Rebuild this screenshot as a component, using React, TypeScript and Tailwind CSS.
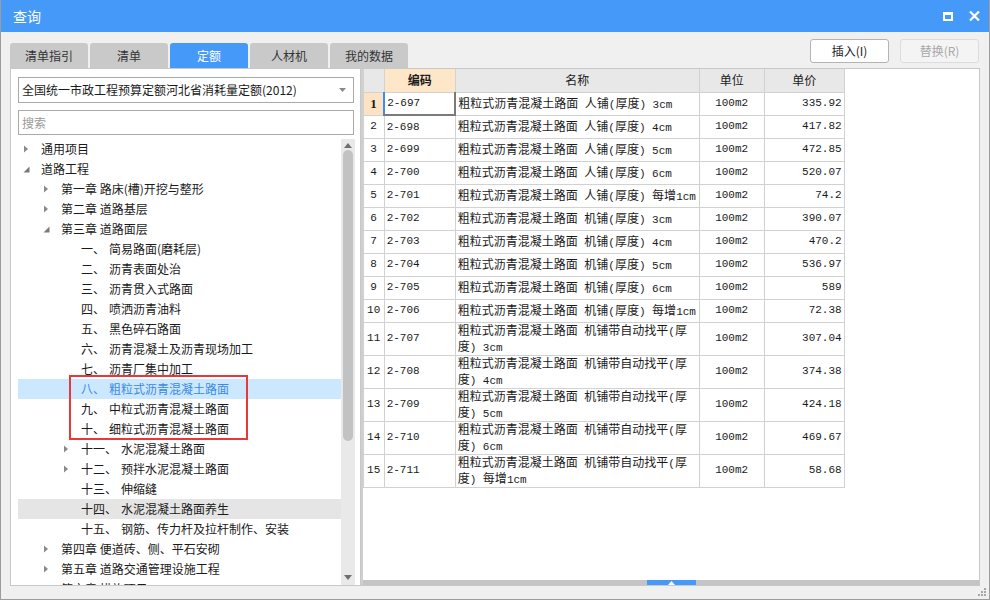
import React from 'react';

type TreeItem = {
  lvl: number;
  text: string;
  num?: string;
  arrow?: 'right' | 'down';
  selected?: boolean;
  hover?: boolean;
};

const TREE: TreeItem[] = [
  { lvl: 0, arrow: 'right', text: '通用项目' },
  { lvl: 0, arrow: 'down', text: '道路工程' },
  { lvl: 1, arrow: 'right', text: '第一章 路床(槽)开挖与整形' },
  { lvl: 1, arrow: 'right', text: '第二章 道路基层' },
  { lvl: 1, arrow: 'down', text: '第三章 道路面层' },
  { lvl: 2, num: '一、', text: '简易路面(磨耗层)' },
  { lvl: 2, num: '二、', text: '沥青表面处治' },
  { lvl: 2, num: '三、', text: '沥青贯入式路面' },
  { lvl: 2, num: '四、', text: '喷洒沥青油料' },
  { lvl: 2, num: '五、', text: '黑色碎石路面' },
  { lvl: 2, num: '六、', text: '沥青混凝土及沥青现场加工' },
  { lvl: 2, num: '七、', text: '沥青厂集中加工' },
  { lvl: 2, num: '八、', text: '粗粒式沥青混凝土路面', selected: true },
  { lvl: 2, num: '九、', text: '中粒式沥青混凝土路面' },
  { lvl: 2, num: '十、', text: '细粒式沥青混凝土路面' },
  { lvl: 2, arrow: 'right', num: '十一、', text: '水泥混凝土路面' },
  { lvl: 2, arrow: 'right', num: '十二、', text: '预拌水泥混凝土路面' },
  { lvl: 2, num: '十三、', text: '伸缩缝' },
  { lvl: 2, num: '十四、', text: '水泥混凝土路面养生', hover: true },
  { lvl: 2, num: '十五、', text: '钢筋、传力杆及拉杆制作、安装' },
  { lvl: 1, arrow: 'right', text: '第四章 便道砖、侧、平石安砌' },
  { lvl: 1, arrow: 'right', text: '第五章 道路交通管理设施工程' },
  { lvl: 1, arrow: 'right', text: '第六章 措施项目' },
];

const BASE = '粗粒式沥青混凝土路面 ';

type Row = { code: string; name: string[]; price: string };

const ROWS: Row[] = [
  { code: '2-697', name: [BASE + '人铺(厚度) 3cm'], price: '335.92' },
  { code: '2-698', name: [BASE + '人铺(厚度) 4cm'], price: '417.82' },
  { code: '2-699', name: [BASE + '人铺(厚度) 5cm'], price: '472.85' },
  { code: '2-700', name: [BASE + '人铺(厚度) 6cm'], price: '520.07' },
  { code: '2-701', name: [BASE + '人铺(厚度) 每增1cm'], price: '74.2' },
  { code: '2-702', name: [BASE + '机铺(厚度) 3cm'], price: '390.07' },
  { code: '2-703', name: [BASE + '机铺(厚度) 4cm'], price: '470.2' },
  { code: '2-704', name: [BASE + '机铺(厚度) 5cm'], price: '536.97' },
  { code: '2-705', name: [BASE + '机铺(厚度) 6cm'], price: '589' },
  { code: '2-706', name: [BASE + '机铺(厚度) 每增1cm'], price: '72.38' },
  { code: '2-707', name: [BASE + '机铺带自动找平(厚', '度) 3cm'], price: '307.04' },
  { code: '2-708', name: [BASE + '机铺带自动找平(厚', '度) 4cm'], price: '374.38' },
  { code: '2-709', name: [BASE + '机铺带自动找平(厚', '度) 5cm'], price: '424.18' },
  { code: '2-710', name: [BASE + '机铺带自动找平(厚', '度) 6cm'], price: '469.67' },
  { code: '2-711', name: [BASE + '机铺带自动找平(厚', '度) 每增1cm'], price: '58.68' },
];

// ascii runs in a narrow mono face, like the old SimSun grid
function Mixed({ s }: { s: string }) {
  const parts = s.split(/([\x20-\x7e]+)/).filter(Boolean);
  return (
    <>
      {parts.map((p, i) =>
        /^[\x20-\x7e]+$/.test(p) ? (
          <span key={i} className="font-['Liberation_Mono'] text-[11px]">{p}</span>
        ) : (
          <span key={i}>{p}</span>
        )
      )}
    </>
  );
}

function Arrow({ dir }: { dir: 'right' | 'down' }) {
  if (dir === 'right') {
    return (
      <svg width="6" height="8" viewBox="0 0 6 8">
        <path d="M1 0.5 L5 4 L1 7.5 Z" fill="#8a8a8a" />
      </svg>
    );
  }
  return (
    <svg width="7" height="7" viewBox="0 0 7 7">
      <path d="M6.5 0.5 L6.5 6.5 L0.5 6.5 Z" fill="#7a7a7a" />
    </svg>
  );
}

const Tab: React.FC<{ label: string; active?: boolean }> = ({ label, active }) => (
  <div
    className={`w-[78px] h-[25px] rounded-t-[3px] flex items-center justify-center text-[12px] ${
      active ? 'bg-[#4599f8] text-white' : 'bg-[#c9c9c9] text-[#333]'
    }`}
  >
    {label}
  </div>
);

export default function App() {
  return (
    <div className="relative w-[990px] h-[600px] bg-[#f0f0f0] border-x border-b border-[#9c9c9c] font-['Noto_Sans_CJK_SC',sans-serif] text-[#1a1a1a] overflow-hidden">
      {/* title bar */}
      <div className="h-[32px] bg-[#4599f8] flex items-center justify-between pl-[12px] pr-[9px]">
        <span className="text-white text-[14px] leading-none">查询</span>
        <div className="flex items-center gap-[16px]">
          <svg width="10" height="9" viewBox="0 0 10 9">
            <rect x="1" y="1.5" width="8" height="6.5" fill="none" stroke="white" strokeWidth="2" />
            <rect x="0" y="0" width="10" height="3" fill="white" />
          </svg>
          <svg width="11" height="10" viewBox="0 0 11 10">
            <path d="M1 0.5 L10 9.5 M10 0.5 L1 9.5" stroke="white" strokeWidth="2.2" />
          </svg>
        </div>
      </div>

      <div className="px-[9px] pt-[7px] pb-[13px]">
        {/* tabs + buttons */}
        <div className="h-[29px] flex justify-between">
          <div className="flex gap-[2px] self-end">
            <Tab label="清单指引" />
            <Tab label="清单" />
            <Tab label="定额" active />
            <Tab label="人材机" />
            <Tab label="我的数据" />
          </div>
          <div className="flex gap-[11px] mr-[1px]">
            <button className="w-[79px] h-[24px] bg-white border border-[#b4b4b4] rounded-[3px] text-[12px] text-[#222]">
              插入(I)
            </button>
            <button className="w-[79px] h-[24px] bg-[#f4f4f4] border border-[#dcdcdc] rounded-[3px] text-[12px] text-[#a8a8a8]">
              替换(R)
            </button>
          </div>
        </div>

        <div className="flex h-[518px]">
          {/* left: tree panel */}
          <div className="w-[351px] h-full bg-white border border-[#c8c8c8] flex flex-col">
            <div className="ml-[7px] mt-[8px] w-[336px] h-[26px] border border-[#a9a9a9] flex items-center justify-between pl-[3px] pr-[7px] text-[12px]">
              <span>全国统一市政工程预算定额河北省消耗量定额(2012)</span>
              <svg width="7" height="4" viewBox="0 0 7 4">
                <path d="M0 0 L7 0 L3.5 4 Z" fill="#8a8a8a" />
              </svg>
            </div>
            <div className="ml-[7px] mt-[7px] w-[336px] h-[25px] border border-[#a9a9a9] flex items-center pl-[3px] text-[12px] text-[#9a9a9a]">
              搜索
            </div>
            <div className="mt-[4px] flex flex-1 min-h-0">
              <div className="flex-1 pl-[7px] overflow-hidden">
                {TREE.map((t, i) => (
                  <div
                    key={i}
                    className={`h-[20px] flex items-center text-[12px] whitespace-nowrap ${
                      t.selected ? 'bg-[#cce8ff] text-[#3a8ae6]' : t.hover ? 'bg-[#e5e5e5]' : ''
                    }`}
                    style={{ paddingLeft: 5 + t.lvl * 20 }}
                  >
                    <span className="w-[18px] flex items-center">{t.arrow && <Arrow dir={t.arrow} />}</span>
                    {t.num ? (
                      <>
                        <span>{t.num}</span>
                        <span className="ml-[4px]">{t.text}</span>
                      </>
                    ) : (
                      <span>{t.text}</span>
                    )}
                  </div>
                ))}
              </div>
              {/* vertical scrollbar */}
              <div className="w-[14px] bg-[#e9e9e9] flex flex-col items-center">
                <svg width="8" height="5" viewBox="0 0 8 5" className="mt-[4px]">
                  <path d="M0 5 L4 0 L8 5 Z" fill="#6f6f6f" />
                </svg>
                <div className="mt-[2px] w-[10px] h-[291px] rounded-full bg-[#c2c2c2]" />
                <div className="flex-1" />
                <svg width="8" height="5" viewBox="0 0 8 5" className="mb-[5px]">
                  <path d="M0 0 L8 0 L4 5 Z" fill="#6f6f6f" />
                </svg>
              </div>
              <div className="w-[5px]" />
            </div>
          </div>

          {/* right: grid */}
          <div className="w-[620px] h-full bg-white border-y border-r border-[#c8c8c8] border-l-2 border-l-[#cfcfcf] flex flex-col">
            <div className="flex-1 min-h-0">
              <table className="table-fixed border-collapse text-[12px] w-[481px]">
                <colgroup>
                  <col className="w-[21px]" />
                  <col className="w-[71px]" />
                  <col className="w-[244px]" />
                  <col className="w-[65px]" />
                  <col className="w-[80px]" />
                </colgroup>
                <thead>
                  <tr className="h-[23px]">
                    <th className="border border-[#d2d2d2] border-t-0 bg-[#e8e8e8]" />
                    <th className="border border-[#d2d2d2] border-t-0 bg-[#fee6c8] font-bold">编码</th>
                    <th className="border border-[#d2d2d2] border-t-0 bg-[#e8e8e8] font-normal">名称</th>
                    <th className="border border-[#d2d2d2] border-t-0 bg-[#e8e8e8] font-normal">单位</th>
                    <th className="border border-[#d2d2d2] border-t-0 bg-[#e8e8e8] font-normal">单价</th>
                  </tr>
                </thead>
                <tbody>
                  {ROWS.map((r, i) => {
                    const tall = r.name.length > 1;
                    return (
                      <tr key={r.code} className={tall ? 'h-[33px]' : 'h-[23px]'}>
                        <td
                          className={`border border-[#d2d2d2] text-center p-0 ${
                            i === 0
                              ? "bg-[#fde3c4] font-['Liberation_Serif'] font-bold text-[13px]"
                              : "font-['Liberation_Mono'] text-[11px]"
                          }`}
                        >
                          {i + 1}
                        </td>
                        <td
                          className={`font-['Liberation_Mono'] text-[11px] pl-[2px] p-0 ${
                            i === 0
                              ? 'border-l-2 border-l-[#3d8de8] border-r-2 border-r-[#7a7a7a] border-b-2 border-b-[#7a7a7a] border-t border-t-[#d2d2d2]'
                              : 'border border-[#d2d2d2]'
                          }`}
                        >
                          {r.code}
                        </td>
                        <td className="border border-[#d2d2d2] pl-[2px] p-0 leading-[13px] whitespace-nowrap overflow-hidden">
                          {r.name.map((l, j) => (
                            <div key={j}>
                              <Mixed s={l} />
                            </div>
                          ))}
                        </td>
                        <td className="border border-[#d2d2d2] text-center p-0 font-['Liberation_Mono'] text-[11px]">100m2</td>
                        <td className="border border-[#d2d2d2] text-right pr-[2px] p-0 font-['Liberation_Mono'] text-[11px]">
                          {r.price}
                        </td>
                      </tr>
                    );
                  })}
                </tbody>
              </table>
            </div>
            {/* horizontal scrollbar */}
            <div className="h-[5px] bg-[#c4c4c4] flex shrink-0">
              <div className="ml-[284px] w-[49px] h-full bg-[#4599f8] flex items-end justify-center">
                <svg width="7" height="4" viewBox="0 0 7 4">
                  <path d="M0 4 L3.5 0 L7 4 Z" fill="white" />
                </svg>
              </div>
            </div>
          </div>
        </div>
      </div>

      {/* size grip */}
      <svg width="9" height="9" viewBox="0 0 9 9" className="absolute right-[2px] bottom-[2px]">
        <rect x="6" y="0" width="2" height="2" fill="#a6a6a6" />
        <rect x="3" y="3" width="2" height="2" fill="#a6a6a6" />
        <rect x="6" y="3" width="2" height="2" fill="#a6a6a6" />
        <rect x="0" y="6" width="2" height="2" fill="#a6a6a6" />
        <rect x="3" y="6" width="2" height="2" fill="#a6a6a6" />
        <rect x="6" y="6" width="2" height="2" fill="#a6a6a6" />
      </svg>

      {/* red annotation box */}
      <div className="absolute left-[68px] top-[375px] w-[179px] h-[65px] border-2 border-[#e8383a] pointer-events-none" />
    </div>
  );
}
